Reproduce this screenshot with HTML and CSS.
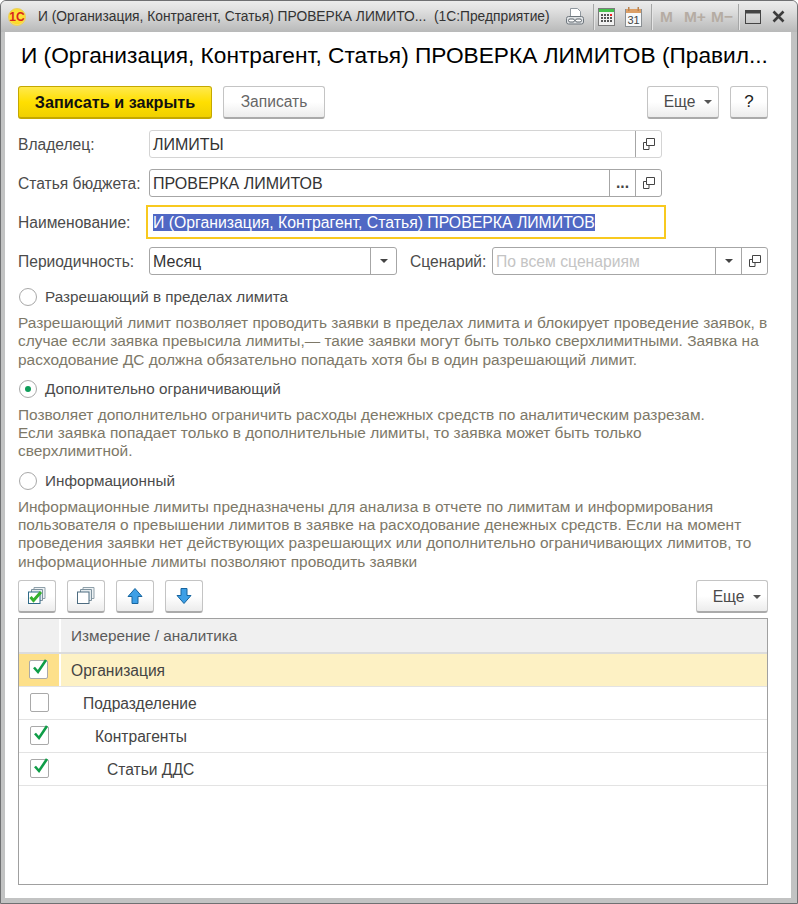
FILE: index.html
```html
<!DOCTYPE html>
<html lang="ru">
<head>
<meta charset="utf-8">
<title>Лимит</title>
<link rel="stylesheet" href="styles.css">
</head>
<body>
<div class="window">
  <div class="titlebar">
    <svg class="logo" viewBox="0 0 18 18" width="18" height="18"><defs><radialGradient id="lg" cx="50%" cy="45%" r="55%"><stop offset="0" stop-color="#ffe94a"/><stop offset=".8" stop-color="#fcd92b"/><stop offset="1" stop-color="#fbeb9a"/></radialGradient></defs><circle cx="9" cy="9" r="8.500" fill="url(#lg)" stroke="#e9cf5c"/><text x="1.300" y="13" class="logo-text">1С</text></svg>
    <div class="wintitle">И (Организация, Контрагент, Статья) ПРОВЕРКА ЛИМИТО...&nbsp; (1С:Предприятие)</div>
    <div class="tools">
      <svg class="ti print" viewBox="0 0 18 18" width="18" height="18"><path d="M4.500 .5h7l3 3v6h-10z" fill="#fff" stroke="#8f979e"/><rect x=".5" y="8.500" width="17" height="7.500" rx="2" fill="#dfe2e4" stroke="#6f777e"/><rect x="2.500" y="11" width="6" height="3" rx="1.500" fill="#fff" stroke="#5f676e"/><rect x="9.500" y="11" width="6" height="3" rx="1.500" fill="#fff" stroke="#5f676e"/></svg>
      <i class="sep s1"></i>
      <svg class="ti" viewBox="0 0 17 18" width="17" height="18"><rect x=".5" y=".5" width="16" height="17" fill="#f1f1f1" stroke="#7b7b7b"/><rect x="1" y="1" width="15" height="3" fill="#43c04b"/><g fill="#555"><rect x="3" y="6" width="2" height="2"/><rect x="6" y="6" width="2" height="2"/><rect x="9" y="6" width="2" height="2"/><rect x="3" y="9" width="2" height="2"/><rect x="6" y="9" width="2" height="2"/><rect x="9" y="9" width="2" height="2"/><rect x="3" y="12" width="2" height="2"/><rect x="6" y="12" width="2" height="2"/><rect x="9" y="12" width="2" height="2"/><rect x="12" y="9" width="2" height="2"/><rect x="12" y="12" width="2" height="2"/></g><rect x="12" y="6" width="2" height="2" fill="#e22"/></svg>
      <svg class="ti cal" viewBox="0 0 17 20" width="17" height="20"><rect x=".5" y="2.500" width="16" height="17" fill="#f7f9fa" stroke="#8a8f93"/><rect x="1" y="2" width="15" height="4" fill="#dc9f66"/><rect x="3" y="0" width="1.500" height="4" fill="#b9824e"/><rect x="12.500" y="0" width="1.500" height="4" fill="#b9824e"/><text x="8.500" y="17" class="cal-text">31</text></svg>
      <i class="sep s2"></i>
      <span class="mem m1">M</span><span class="mem m2">M+</span><span class="mem m3">M−</span>
      <i class="sep s3"></i>
      <svg class="ti maxi" viewBox="0 0 16 14" width="16" height="14"><rect x=".5" y=".5" width="15" height="13" fill="none" stroke="#444"/><rect x="1" y="1" width="14" height="2.500" fill="#444"/></svg>
      <svg class="ti close" viewBox="0 0 13 13" width="13" height="13"><path d="M1.500 1.500l10 10M11.500 1.500l-10 10" stroke="#3c3c3c" stroke-width="2.600"/></svg>
    </div>
  </div>
  <main class="content">
    <h1 class="heading">И (Организация, Контрагент, Статья) ПРОВЕРКА ЛИМИТОВ (Правил...</h1>
    <div class="cmdbar">
      <button class="btn primary">Записать и закрыть</button>
      <button class="btn save">Записать</button>
      <div class="spacer"></div>
      <button class="btn more">Еще<b class="caret"></b></button>
      <button class="btn help">?</button>
    </div>
    <div class="row r-owner">
      <label class="lbl">Владелец:</label>
      <div class="field f-owner"><span class="val">ЛИМИТЫ</span><span class="cell"><svg class="open" viewBox="0 0 12 12" width="12" height="12"><path d="M3.500.5h8v7h-8z M6 7.500v4H.5v-7h3" fill="none" stroke="#444"/></svg></span></div>
    </div>
    <div class="row r-item">
      <label class="lbl">Статья бюджета:</label>
      <div class="field f-item"><span class="val">ПРОВЕРКА ЛИМИТОВ</span><span class="cell dots">...</span><span class="cell"><svg class="open" viewBox="0 0 12 12" width="12" height="12"><path d="M3.500.5h8v7h-8z M6 7.500v4H.5v-7h3" fill="none" stroke="#444"/></svg></span></div>
    </div>
    <div class="row r-name">
      <label class="lbl">Наименование:</label>
      <div class="field-focus"><span class="sel">И (Организация, Контрагент, Статья) ПРОВЕРКА ЛИМИТОВ</span></div>
    </div>
    <div class="row r-period">
      <label class="lbl">Периодичность:</label>
      <div class="field f-period"><span class="val">Месяц</span><span class="cell"><b class="caret dark"></b></span></div>
      <label class="lbl lbl2">Сценарий:</label>
      <div class="field f-scen"><span class="val ph">По всем сценариям</span><span class="cell"><b class="caret dark"></b></span><span class="cell"><svg class="open" viewBox="0 0 12 12" width="12" height="12"><path d="M3.500.5h8v7h-8z M6 7.500v4H.5v-7h3" fill="none" stroke="#444"/></svg></span></div>
    </div>
    <div class="radio r1"><span class="dot"></span>Разрешающий в пределах лимита</div>
    <p class="desc d1">Разрешающий лимит позволяет проводить заявки в пределах лимита и блокирует проведение заявок, в<br>случае если заявка превысила лимиты,— такие заявки могут быть только сверхлимитными. Заявка на<br>расходование ДС должна обязательно попадать хотя бы в один разрешающий лимит.</p>
    <div class="radio r2"><span class="dot on"></span>Дополнительно ограничивающий</div>
    <p class="desc d2">Позволяет дополнительно ограничить расходы денежных средств по аналитическим разрезам.<br>Если заявка попадает только в дополнительные лимиты, то заявка может быть только<br>сверхлимитной.</p>
    <div class="radio r3"><span class="dot"></span>Информационный</div>
    <p class="desc d3">Информационные лимиты предназначены для анализа в отчете по лимитам и информирования<br>пользователя о превышении лимитов в заявке на расходование денежных средств. Если на момент<br>проведения заявки нет действующих разрешающих или дополнительно ограничивающих лимитов, то<br>информационные лимиты позволяют проводить заявки</p>
    <div class="toolbar">
      <button class="btn tool"><svg viewBox="0 0 20 20" width="20" height="20"><path d="M7 1.500h11v11H7z" fill="#eef2f4" stroke="#8fa0aa"/><path d="M4.500 3.500h11v11h-11z" fill="#e4ebee" stroke="#7e929e"/><rect x="1.500" y="6" width="11.500" height="11.500" fill="#fff" stroke="#2f6a88"/><path d="M3.500 11l3 3.500L14 6" fill="none" stroke="#35b12e" stroke-width="3"/></svg></button>
      <button class="btn tool"><svg viewBox="0 0 20 20" width="20" height="20"><path d="M7 1.500h11v11H7z" fill="#eef2f4" stroke="#8fa0aa"/><path d="M4.500 3.500h11v11h-11z" fill="#e4ebee" stroke="#7e929e"/><rect x="1.500" y="6" width="11.500" height="11.500" fill="#fff" stroke="#4d6c80"/></svg></button>
      <button class="btn tool"><svg viewBox="0 0 20 20" width="20" height="20"><path d="M10 2.500l7 8h-4v7H7v-7H3z" fill="#3d9fe6" stroke="#17659f" stroke-linejoin="round"/></svg></button>
      <button class="btn tool"><svg viewBox="0 0 20 20" width="20" height="20"><path d="M10 17.500l7-8h-4v-7H7v7H3z" fill="#3d9fe6" stroke="#17659f" stroke-linejoin="round"/></svg></button>
      <div class="spacer"></div>
      <button class="btn more">Еще<b class="caret"></b></button>
    </div>
    <div class="table">
      <div class="thead"><div class="c1"></div><div class="c2">Измерение / аналитика</div></div>
      <div class="tr selected"><div class="c1"><span class="check"><svg viewBox="0 0 20 20" width="20" height="20"><path d="M4 9.500l4 4.500 8-12" fill="none" stroke="#0f9d47" stroke-width="2.600"/></svg></span></div><div class="c2">Организация</div></div>
      <div class="tr"><div class="c1"><span class="check"></span></div><div class="c2 l1">Подразделение</div></div>
      <div class="tr"><div class="c1"><span class="check"><svg viewBox="0 0 20 20" width="20" height="20"><path d="M4 9.500l4 4.500 8-12" fill="none" stroke="#0f9d47" stroke-width="2.600"/></svg></span></div><div class="c2 l2">Контрагенты</div></div>
      <div class="tr"><div class="c1"><span class="check"><svg viewBox="0 0 20 20" width="20" height="20"><path d="M4 9.500l4 4.500 8-12" fill="none" stroke="#0f9d47" stroke-width="2.600"/></svg></span></div><div class="c2 l3">Статьи ДДС</div></div>
    </div>
  </main>
</div>
</body>
</html>
```
FILE: styles.css
```css
* { box-sizing: border-box; }
html, body { margin: 0; padding: 0; background: #fff; }
body { width: 798px; height: 904px; overflow: hidden; font: 15.600px/18px "Liberation Sans", Arial, sans-serif; color: #4b4b4b; }
.window { width: 798px; height: 904px; display: flex; flex-direction: column; background: #c2c3c3; border: 1px solid #6f7072; border-radius: 6px 6px 0 0; padding: 0 6px 5px 4px; }
.titlebar { height: 31px; margin: 0 -6px 0 -4px; flex: none; display: flex; align-items: center; padding-left: 7px; background: linear-gradient(#ececec 0, #e2e2e2 25%, #b8b9b9 100%); border-radius: 5px 5px 0 0; }
.logo { flex: none; }
.logo-text { font: bold 12px "Liberation Sans", sans-serif; fill: #d8261c; }
.cal-text { font: 11px "Liberation Sans", sans-serif; fill: #444; text-anchor: middle; }
.wintitle { margin-left: 12px; font-size: 13.800px; color: #333; white-space: nowrap; flex: none; width: 528px; }
.tools { display: flex; align-items: center; height: 31px; flex: none; }
.ti { flex: none; display: block; }
.sep { width: 1px; height: 26px; background: #a5a6a6; box-shadow: 1px 0 0 #e5e5e5; flex: none; }
.s1 { margin: 0 4px 0 9px; }
.s2 { margin: 0 8px 0 9px; }
.s3 { margin: 0 6px 0 5px; }
.cal { margin-left: 10px; }
.mem { font: bold 15.500px "Liberation Sans", sans-serif; color: #b5aca3; flex: none; }
.m2 { margin-left: 11px; }
.m3 { margin-left: 5px; }
.close { margin-left: 11px; }
.content { flex: 1; background: #fff; padding: 7px 23px 0 13px; display: flex; flex-direction: column; min-height: 0; }
.heading { margin: 0 0 0 3px; font-weight: 400; font-size: 22.700px; line-height: 32px; color: #000; white-space: nowrap; height: 32px; }
.cmdbar { display: flex; margin-top: 15px; height: 33px; flex: none; }
.toolbar { display: flex; margin-top: 9px; height: 33px; flex: none; }
.toolbar .more { padding-top: 2px; }
.spacer { flex: 1; }
.btn { font: 15.600px "Liberation Sans", sans-serif; color: #4b4b4b; height: 33px; padding: 0; border: 1px solid #c4c4c4; border-bottom: 2px solid #aaa; border-radius: 3px; background: linear-gradient(#fff, #fff 50%, #ececec); display: flex; align-items: center; justify-content: center; }
.primary { width: 194px; font-weight: 700; font-size: 16.200px; color: #111; background: linear-gradient(#ffe94d, #ffdf00 50%, #f0d000); border-color: #c4a800; }
.save { width: 102px; margin-left: 11px; color: #666; }
.more { width: 72px; padding-left: 10px; }
.help { width: 38px; margin-left: 11px; color: #222; font-size: 17px; }
.caret { display: inline-block; width: 0; height: 0; border: 4px solid transparent; border-top-color: #555; border-bottom: 0; margin-left: 9px; }
.caret.dark { margin: 0; border-top-color: #444; }
.tool { width: 38px; margin-right: 11px; }
.row { display: flex; align-items: center; flex: none; }
.lbl { width: 131px; flex: none; color: #4b4b4b; padding-top: 2px; }
.r-owner { margin-top: 11px; height: 28px; }
.r-item { margin-top: 11px; height: 28px; }
.r-name { margin-top: 8px; height: 34px; }
.r-name .lbl { width: 128px; }
.r-period { margin-top: 8px; height: 28px; }
.field { height: 28px; display: flex; border: 1px solid #a6a6a6; border-radius: 3px; align-items: stretch; }
.f-owner { width: 513px; border-color: #d4d4d4; }
.f-item { width: 513px; }
.f-period { width: 248px; }
.f-scen { width: 276px; }
.val { flex: 1; padding-left: 3px; line-height: 28px; color: #333; white-space: nowrap; font-size: 16px; }
.ph { color: #c4c4c4; font-size: 15.700px; }
.cell { width: 26px; border-left: 1px solid #a6a6a6; display: flex; align-items: center; justify-content: center; flex: none; }
.dots { font-weight: 700; line-height: 26px; color: #444; }
.open { display: block; }
.lbl2 { width: 82px; margin-left: 13px; }
.field-focus { width: 520px; height: 34px; border: 2px solid #f8c91f; padding-left: 5px; display: flex; align-items: center; }
.sel { background: #5068c4; color: #fff; line-height: 17px; white-space: nowrap; font-size: 15.800px; margin-top: 1px; }
.radio { display: flex; align-items: center; height: 18px; flex: none; color: #4b4b4b; font-size: 15.250px; }
.dot { width: 18px; height: 18px; border: 1px solid #a8a8a8; border-radius: 50%; margin: 0 8px 0 1px; flex: none; display: flex; align-items: center; justify-content: center; background: #fff; }
.dot.on::after { content: ""; width: 6px; height: 6px; border-radius: 50%; background: #0f9d5a; }
.r1 { margin-top: 13px; }
.r2, .r3 { margin-top: 11px; }
.desc { margin: 8px 0 0; width: 750px; color: #7d7868; font-size: 15.450px; line-height: 18.300px; flex: none; white-space: nowrap; }
.table { margin-top: 5px; width: 750px; height: 267px; border: 1px solid #a0a0a0; flex: none; }
.thead, .tr { display: flex; }
.thead { height: 35px; background: #f0f0f0; border-bottom: 2px solid #dcdcdc; }
.thead .c1 { width: 42px; border-right: 2px solid #fff; }
.thead .c2 { padding-left: 10px; line-height: 33px; color: #5b5b5b; font-size: 15.300px; }
.tr { height: 33px; border-bottom: 1px solid #e3e3e3; color: #444; align-items: stretch; }
.tr .c1 { width: 42px; display: flex; align-items: center; justify-content: center; flex: none; padding-right: 1px; }
.tr .c2 { flex: 1; padding-left: 10px; line-height: 34px; }
.tr .l1 { padding-left: 22px; }
.tr .l2 { padding-left: 34px; }
.tr .l3 { padding-left: 46px; }
.selected { background: #fdf1c4; }
.selected .c1 { background: #fde08a; border-right: 2px solid #fff; }
.check { width: 19px; height: 19px; border: 1px solid #a9a9a9; border-radius: 2px; background: #fff; display: block; position: relative; }
.check svg { position: absolute; left: 0; top: -3px; }
```
